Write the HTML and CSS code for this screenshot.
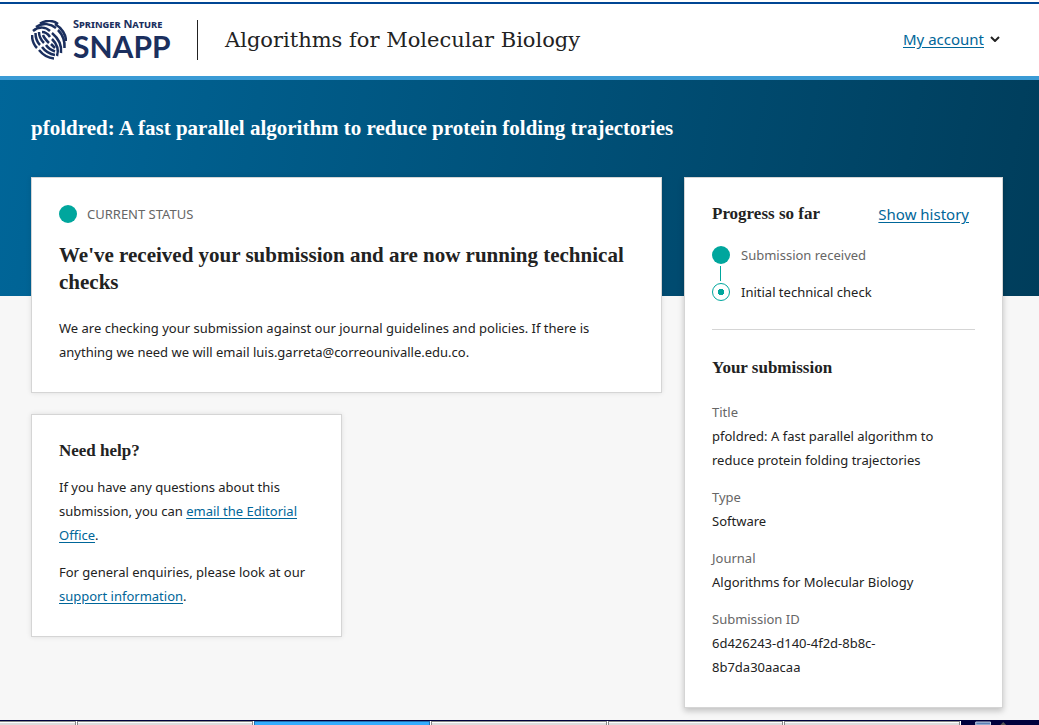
FILE: index.html
```html
<!DOCTYPE html>
<html lang="en">
<head>
<meta charset="utf-8">
<meta name="viewport" content="width=device-width, initial-scale=1">
<title>Algorithms for Molecular Biology</title>
<link rel="stylesheet" href="styles.css">
</head>
<body>
<header class="header">
  <div class="logo">
    <svg class="logo-mark" viewBox="0 0 36 40" aria-hidden="true">
      <g fill="none" stroke="#1b2f5e" stroke-width="2.500">
        <path d="M9 3.500C15 0 22 0 27 4"/>
        <path d="M5 7C12 2 20 4 25 8M27 10C31 14 34 20 33.500 28"/>
        <path d="M2 11C8 6 15 7 19 11M21 13C27 18 31 25 30 33"/>
        <path d="M24 4C31 8 35 15 35 21"/>
        <path d="M11 12C14 12 17 14 19 17M21 19C26 24 28 30 26 36"/>
        <path d="M1 15C1 20 3 25 6 28M8 30C12 35 17 38 23 38.500"/>
        <path d="M4.500 13C4.500 18 6 22 9 25M11 27C14 31 18 34 24 35"/>
        <path d="M8 12C8 17 11 21 13 23M15 25C17 28 20 30 24 31.500"/>
        <path d="M12 15C13 18 16 21 18 23M20 24L24 28"/>
      </g>
    </svg>
    <div class="logo-text">
      <span class="logo-owner">Springer Nature</span>
      <span class="logo-name">SNAPP</span>
    </div>
  </div>
  <div class="journal">Algorithms for Molecular Biology</div>
  <a class="account" href="#"><span class="account-label">My account</span>
    <svg class="chevron" viewBox="0 0 10 6" aria-hidden="true"><path d="M1 1L5 5L9 1" fill="none" stroke="#222" stroke-width="2"/></svg>
  </a>
</header>
<main class="main">
  <h1 class="title">pfoldred: A fast parallel algorithm to reduce protein folding trajectories</h1>
  <div class="columns">
    <div class="primary">
      <section class="card status">
        <div class="status-label"><span class="dot"></span>CURRENT STATUS</div>
        <h2 class="status-heading">We've received your submission and are now running technical checks</h2>
        <p class="text">We are checking your submission against our journal guidelines and policies. If there is anything we need we will email luis.garreta@correounivalle.edu.co.</p>
      </section>
      <section class="card help">
        <h3 class="heading">Need help?</h3>
        <p class="text">If you have any questions about this submission, you can <a href="#">email the Editorial Office</a>.</p>
        <p class="text">For general enquiries, please look at our <a href="#">support information</a>.</p>
      </section>
    </div>
    <aside class="card side">
      <section class="progress">
        <div class="progress-head">
          <h3 class="heading">Progress so far</h3>
          <a class="history" href="#">Show history</a>
        </div>
        <ol class="steps">
          <li class="step done"><span class="dot"></span>Submission received</li>
          <li class="step"><span class="ring"></span>Initial technical check</li>
        </ol>
      </section>
      <section class="submission">
        <h3 class="heading">Your submission</h3>
        <dl class="details">
          <dt>Title</dt><dd>pfoldred: A fast parallel algorithm to reduce protein folding trajectories</dd>
          <dt>Type</dt><dd>Software</dd>
          <dt>Journal</dt><dd>Algorithms for Molecular Biology</dd>
          <dt>Submission ID</dt><dd>6d426243-d140-4f2d-8b8c-8b7da30aacaa</dd>
        </dl>
      </section>
    </aside>
  </div>
</main>
<footer class="taskbar" aria-hidden="true">
  <span class="task first"></span><span class="task"></span><span class="task active"></span><span class="task"></span><span class="task"></span><span class="task"></span>
  <span class="tray"><svg viewBox="0 0 79 4"><path d="M15 1H30V4H15Z" fill="#5b7fb5" stroke="#c8d4e8"/><path d="M40 4L43 1L46 4Z" fill="#555"/></svg></span>
</footer>
</body>
</html>
```

FILE: styles.css
```css
* { box-sizing: border-box; }
body {
  margin: 0;
  min-height: 100vh;
  display: flex;
  flex-direction: column;
  background: #f7f7f7;
  color: #222;
  font: 13px/24px "Noto Sans", sans-serif;
}
h1, h2, h3, p, ol, dl, dd { margin: 0; padding: 0; }
a { color: #006699; text-underline-offset: 2px; }

.header {
  display: flex;
  align-items: center;
  height: 80px;
  padding: 0 39px 0 31px;
  background: linear-gradient(#fff 2px, #004694 2px, #004694 4px, #fff 4px);
  border-bottom: 4px solid #3a9bd5;
}
.logo { display: flex; gap: 6px; align-items: center; padding-top: 4px; color: #1b2f5e; }
.logo-mark { width: 36px; height: 40px; }
.logo-text { display: flex; flex-direction: column; width: 98px; }
.logo-owner { font: bold 11px/12px "Noto Sans", sans-serif; font-variant: small-caps; white-space: nowrap; }
.logo-name { font: bold 30px/32px Lato, sans-serif; }
.journal {
  margin: 4px 0 0 26px;
  padding-left: 27px;
  border-left: 1px solid #222;
  font: 21px/40px "DejaVu Serif", serif;
}
.account { display: flex; align-items: center; gap: 6px; margin-left: auto; padding-top: 2px; font-size: 15px; text-decoration: none; }
.account-label { text-decoration: underline; }
.chevron { width: 10px; height: 6px; }

.main {
  flex: 1;
  padding: 34px 36px 12px 31px;
  background: linear-gradient(100deg, #006699, #003d5b) 0 0 / 100% 216px no-repeat;
}
.title { color: #fff; font: bold 21px/28px "Liberation Serif", serif; }
.columns { display: grid; grid-template-columns: minmax(0, 1fr) 319px; gap: 22px; margin-top: 35px; align-items: start; }
.primary { display: flex; flex-direction: column; gap: 21px; align-items: flex-start; }
.card { padding: 27px; background: #fff; border: 1px solid #d5d5d5; box-shadow: 0 0 5px rgba(0, 0, 0, 0.1); }
.status { width: 100%; padding: 24px 27px 28px; }
.status-label { display: flex; align-items: center; gap: 10px; color: #666; }
.dot { flex: none; width: 18px; height: 18px; border-radius: 50%; background: #00a69d; }
.status-heading { margin: 16px 0 20px; font: bold 21px/27px "Liberation Serif", serif; }
.help { width: 311px; padding: 24px 27px 28px; }
.heading { font: bold 17px/24px "Liberation Serif", serif; }
.help .text { margin-top: 13px; }
.help .heading + .text { margin-top: 12px; }

.side { padding: 0 27px 28px; box-shadow: 0 3px 6px rgba(0, 0, 0, 0.22); }
.progress { padding: 24px 0 25px; border-bottom: 1px solid #d5d5d5; }
.progress-head { display: flex; justify-content: space-between; padding-right: 6px; }
.history { font-size: 15px; }
.steps { display: grid; gap: 13px; margin-top: 17px; list-style: none; }
.step { position: relative; display: flex; align-items: center; gap: 11px; }
.done { color: #666; }
.done::after { content: ""; position: absolute; left: 8px; top: 23px; width: 1px; height: 15px; background: #00a69d; }
.ring { flex: none; width: 18px; height: 18px; border: 1px solid #00a69d; border-radius: 50%; background: radial-gradient(circle, #00a69d 3px, #fff 3px); }
.submission { padding-top: 26px; }
.details { margin-top: 20px; padding-right: 26px; }
.details dt { color: #666; }
.details dd { margin-bottom: 13px; }
.details dd:last-child { margin-bottom: 0; }

.taskbar { display: flex; height: 5px; border-top: 1px solid #00003c; background: #fff; }
.task { flex: 177; margin-right: 1px; border: 1px solid #888; border-bottom: 0; background: linear-gradient(#fff 1px, #ddd 1px); }
.first { flex: 76; border-left: 0; }
.active { border-color: #2070b0; background: #33adff; }
.tray { flex: 79; background: #00003c; }
.tray svg { display: block; width: 100%; height: 4px; }
```
